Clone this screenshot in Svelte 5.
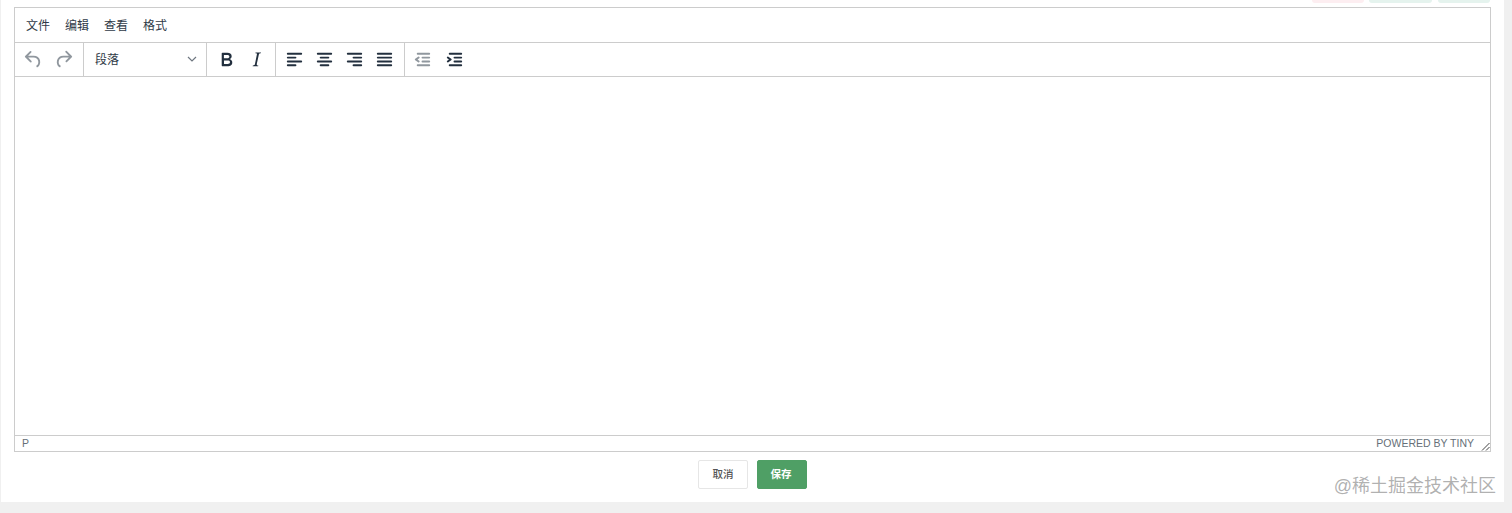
<script>
  const menus = ['文件', '编辑', '查看', '格式'];
  const icons = {
    undo: 'M6.4 8H12c3.7 0 6.2 2 6.8 5.1.6 2.7-.4 5.6-2.3 6.8a1 1 0 0 1-1-1.8c1.1-.6 1.8-2.7 1.4-4.6-.5-2.1-2.1-3.5-4.9-3.5H6.4l3.3 3.3a1 1 0 1 1-1.4 1.4l-5-5a1 1 0 0 1 0-1.4l5-5a1 1 0 0 1 1.4 1.4L6.4 8z',
    redo: 'M17.6 10H12c-2.8 0-4.4 1.4-4.9 3.5-.4 2 .3 4 1.4 4.6a1 1 0 1 1-1 1.8c-2-1.2-2.9-4.1-2.3-6.8.6-3 3-5.1 6.8-5.1h5.6l-3.3-3.3a1 1 0 1 1 1.4-1.4l5 5a1 1 0 0 1 0 1.4l-5 5a1 1 0 0 1-1.4-1.4l3.3-3.3z',
    bold: 'M7.8 19c-.3 0-.5 0-.6-.2l-.2-.5V5.7c0-.2 0-.4.2-.5l.6-.2h5c1.5 0 2.7.3 3.5 1 .7.6 1.1 1.4 1.1 2.5a3 3 0 0 1-.6 1.9c-.4.6-1 1-1.6 1.2.4.1.9.3 1.3.6s.8.7 1 1.2c.4.4.5 1 .5 1.6 0 1.3-.4 2.3-1.3 3-.8.7-2.1 1-3.8 1H7.8zm5-8.3c.6 0 1.2-.1 1.6-.5.4-.3.6-.7.6-1.3 0-1.1-.8-1.7-2.3-1.7H9.3v3.5h3.4zm.5 6c.7 0 1.3-.1 1.7-.4.4-.4.6-.9.6-1.5s-.2-1-.7-1.4c-.4-.3-1-.4-2-.4H9.4v3.8h4z',
    italic: 'M16.7 4.7l-.1.9h-.3c-.6 0-1 0-1.4.3-.3.3-.4.6-.5 1.1l-2.1 9.8v.6c0 .5.4.8 1.4.8h.2l-.2.8H8l.2-.8h.2c1.1 0 1.8-.5 2-1.5l2-9.8.1-.5c0-.6-.4-.8-1.4-.8h-.3l.2-.9h5.8z',
    left: 'M5 5h14a1 1 0 0 1 0 2H5a1 1 0 1 1 0-2zm0 4h8a1 1 0 0 1 0 2H5a1 1 0 1 1 0-2zm0 8h8a1 1 0 0 1 0 2H5a1 1 0 0 1 0-2zm0-4h14a1 1 0 0 1 0 2H5a1 1 0 0 1 0-2z',
    center: 'M5 5h14a1 1 0 0 1 0 2H5a1 1 0 1 1 0-2zm3 4h8a1 1 0 0 1 0 2H8a1 1 0 1 1 0-2zm0 8h8a1 1 0 0 1 0 2H8a1 1 0 0 1 0-2zm-3-4h14a1 1 0 0 1 0 2H5a1 1 0 0 1 0-2z',
    right: 'M5 5h14a1 1 0 0 1 0 2H5a1 1 0 1 1 0-2zm6 4h8a1 1 0 0 1 0 2h-8a1 1 0 0 1 0-2zm0 8h8a1 1 0 0 1 0 2h-8a1 1 0 0 1 0-2zm-6-4h14a1 1 0 0 1 0 2H5a1 1 0 0 1 0-2z',
    justify: 'M5 5h14a1 1 0 0 1 0 2H5a1 1 0 1 1 0-2zm0 4h14a1 1 0 0 1 0 2H5a1 1 0 1 1 0-2zm0 4h14a1 1 0 0 1 0 2H5a1 1 0 0 1 0-2zm0 4h14a1 1 0 0 1 0 2H5a1 1 0 0 1 0-2z',
    outdent: 'M7 5h12a1 1 0 0 1 0 2H7a1 1 0 1 1 0-2zm5 4h7a1 1 0 0 1 0 2h-7a1 1 0 0 1 0-2zm0 4h7a1 1 0 0 1 0 2h-7a1 1 0 0 1 0-2zm-5 4h12a1 1 0 0 1 0 2H7a1 1 0 0 1 0-2zm1.6-3.8a1 1 0 0 1-1.2 1.6l-3-2a1 1 0 0 1 0-1.6l3-2a1 1 0 0 1 1.2 1.6L6.8 12l1.8 1.2z',
    indent: 'M7 5h12a1 1 0 0 1 0 2H7a1 1 0 1 1 0-2zm5 4h7a1 1 0 0 1 0 2h-7a1 1 0 0 1 0-2zm0 4h7a1 1 0 0 1 0 2h-7a1 1 0 0 1 0-2zm-5 4h12a1 1 0 0 1 0 2H7a1 1 0 0 1 0-2zM5.6 9.200l3 2a1 1 0 0 1 0 1.600l-3 2a1 1 0 1 1-1.200-1.600L6.200 12 4.400 10.800a1 1 0 0 1 1.200-1.600z'
  };
  const groups = [
    { cls: 'first', items: [['undo', true], ['redo', true]] },
    { cls: 'select' },
    { cls: 'format', items: [['bold', false], ['italic', false]] },
    { cls: 'align', items: [['left', false], ['center', false], ['right', false], ['justify', false]] },
    { cls: 'indent', items: [['outdent', true], ['indent', false]] }
  ];
</script>

<div class="page">
  <main class="panel">
    <div class="chips">
      <span class="chip pink"></span>
      <span class="chip green wide"></span>
      <span class="chip green"></span>
    </div>

    <section class="editor">
      <nav class="menubar">
        {#each menus as m}<span class="menu">{m}</span>{/each}
      </nav>
      <div class="toolbar">
        {#each groups as g}
          <div class="group {g.cls}">
            {#if g.items}
              {#each g.items as [name, dim]}
                <span class="tool" class:dim>
                  <svg width="23" height="23" viewBox="0 0 24 24"><path d={icons[name]} /></svg>
                </span>
              {/each}
            {:else}
              <span class="select-label">段落</span>
              <svg class="chev" width="10" height="10" viewBox="0 0 10 10"><path d="M1 3l4 4 4-4" /></svg>
            {/if}
          </div>
        {/each}
      </div>
      <div class="content"></div>
      <footer class="status">
        <span class="path">P</span>
        <span class="brand">POWERED BY TINY</span>
        <svg class="grip" width="9" height="9" viewBox="0 0 9 9"><path d="M8.500 1L1 8.500M8.500 5L5 8.500" /></svg>
      </footer>
    </section>

    <div class="actions">
      <button class="btn">取消</button>
      <button class="btn primary">保存</button>
    </div>
  </main>
  <span class="watermark">@稀土掘金技术社区</span>
</div>

<style>
  :global(body) {
    margin: 0;
    background: #f0f0f0;
  }
  .page {
    height: 513px;
    overflow: hidden;
    position: relative;
    font-family: "Liberation Sans", "Noto Sans CJK SC", sans-serif;
    color: #2f3a47;
  }
  .panel {
    width: 1503px;
    height: 502px;
    margin-left: 1px;
    box-sizing: border-box;
    background: #fff;
    padding: 0 13px;
  }
  .chips {
    height: 3px;
    width: 1478px;
    display: flex;
    justify-content: flex-end;
    gap: 5px;
    margin-bottom: 4px;
    box-sizing: border-box;
    padding-right: 2px;
  }
  .chip {
    width: 52px;
    height: 3px;
    border-radius: 0 0 3px 3px;
  }
  .chip.wide { width: 63px; margin-right: 1px; }
  .pink { background: #fdeef1; }
  .green { background: #e5f3ee; }
  .editor {
    width: 1477px;
    height: 445px;
    box-sizing: border-box;
    border: 1px solid #ccc;
    display: flex;
    flex-direction: column;
  }
  .menubar {
    height: 32px;
    padding: 0 0 2px 11px;
    flex: none;
    display: flex;
    align-items: center;
    gap: 15px;
    border-bottom: 1px solid #ccc;
    font-size: 12px;
  }
  .toolbar {
    height: 33px;
    flex: none;
    display: flex;
    border-bottom: 1px solid #ccc;
  }
  .group {
    display: flex;
    align-items: center;
    justify-content: space-between;
    border-right: 1px solid #ccc;
    box-sizing: border-box;
    height: 33px;
    padding-bottom: 1px;
  }
  .group.first { width: 69px; padding-left: 4px; padding-right: 5px; }
  .group.select { width: 123px; padding-left: 11px; padding-right: 9px; padding-bottom: 2px; }
  .group.format { width: 69px; padding-left: 4px; padding-right: 4px; }
  .group.align { width: 129px; padding-left: 3px; padding-right: 5px; }
  .group.indent { border-right: 0; width: 70px; padding-left: 2px; padding-right: 6px; }
  .tool {
    width: 30px;
    display: flex;
    justify-content: center;
  }
  .tool svg { display: block; }
  .tool path { fill: #222f3e; }
  .tool.dim path { fill: rgba(34, 47, 62, 0.5); }
  .select-label { font-size: 12px; }
  .chev { fill: none; }
  .chev path { stroke: #6f7780; stroke-width: 1.200; fill: none; }
  .content { flex: 1; }
  .status {
    height: 16px;
    flex: none;
    box-sizing: border-box;
    border-top: 1px solid #ccc;
    position: relative;
    display: flex;
    align-items: center;
    justify-content: space-between;
    padding: 0 16px 2px 7px;
    font-size: 10.500px;
    color: #666f78;
  }
  .grip {
    position: absolute;
    right: 0;
    bottom: 0;
  }
  .grip path { stroke: #444; stroke-width: 1; fill: none; }
  .actions {
    display: flex;
    justify-content: center;
    gap: 9px;
    margin-top: 8px;
  }
  .btn {
    width: 50px;
    height: 29px;
    padding: 0 0 2px;
    box-sizing: border-box;
    border: 1px solid #e6e6e6;
    border-radius: 2px;
    background: #fff;
    color: #555;
    font: 500 10.500px "Liberation Sans", "Noto Sans CJK SC", sans-serif;
  }
  .primary {
    background: #4f9f65;
    border-color: #4f9f65;
    color: #fff;
    font-weight: 700;
    padding-right: 2px;
  }
  .watermark {
    position: absolute;
    right: 16px;
    top: 475px;
    font-size: 18px;
    line-height: 22px;
    color: rgba(110, 110, 110, 0.55);
  }
</style>
